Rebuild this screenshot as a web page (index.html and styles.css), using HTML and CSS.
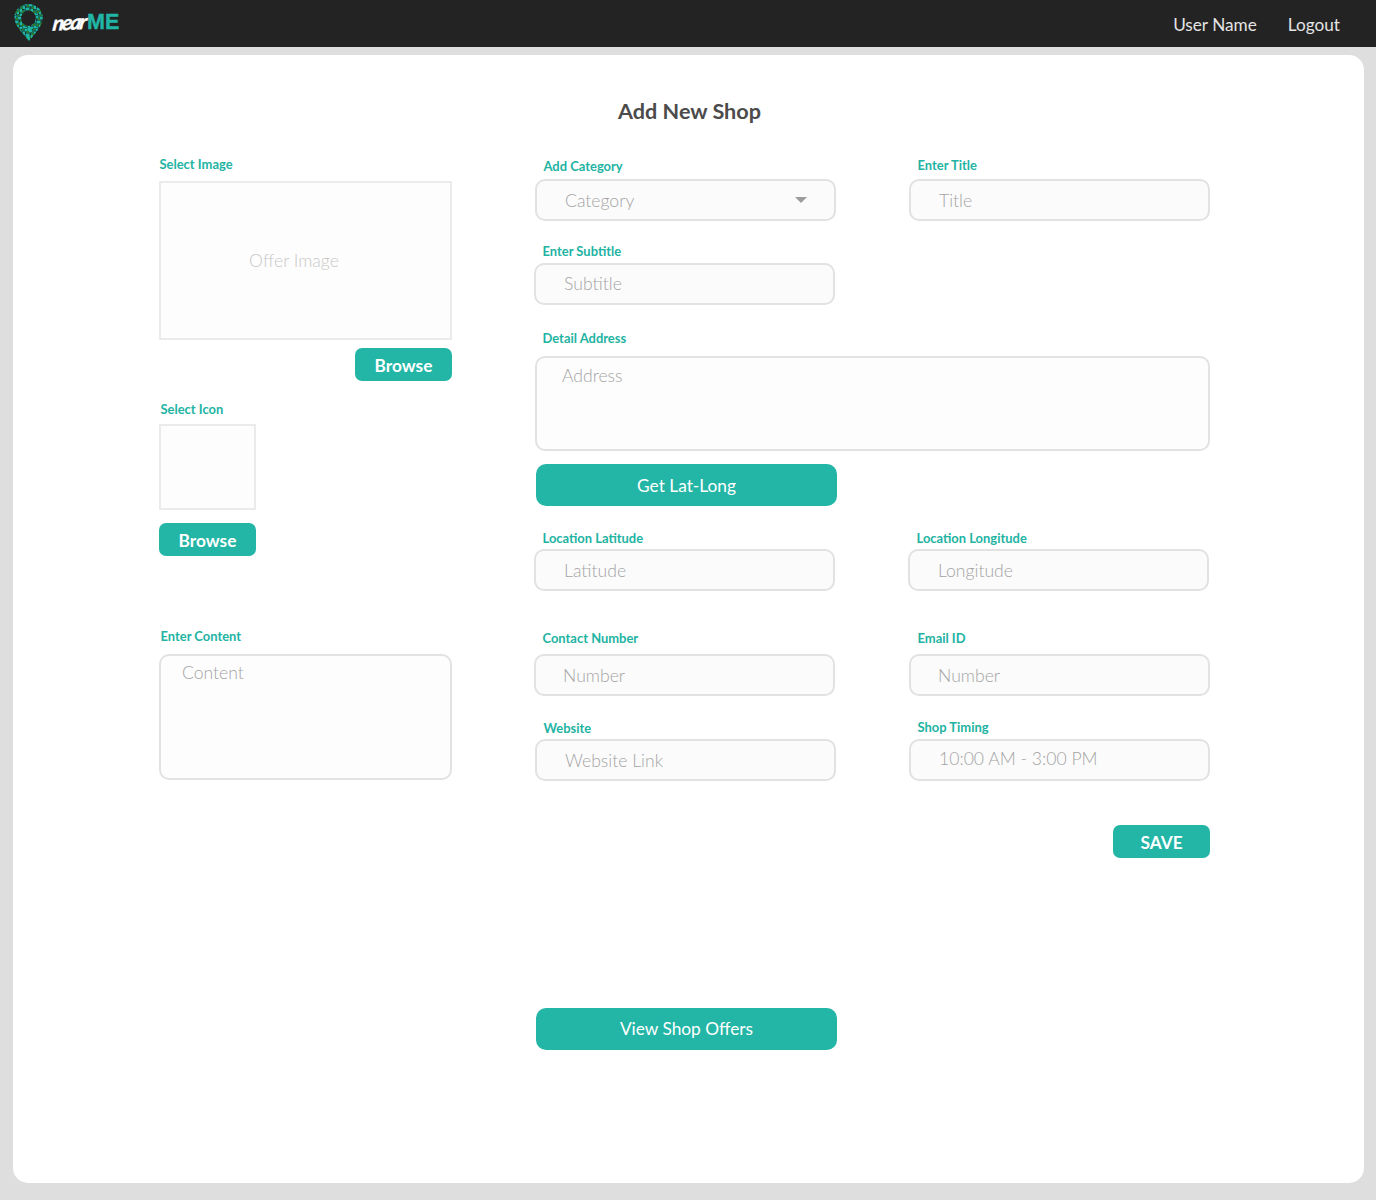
FILE: index.html
```html
<!DOCTYPE html>
<html lang="en">
<head>
<meta charset="utf-8">
<title>nearME - Add New Shop</title>
<link rel="stylesheet" href="styles.css">
</head>
<body>
<header class="topbar">
  <a class="brand">
    <svg class="pin" width="30" height="40" viewBox="0 0 30 40">
      <defs>
        <pattern id="speckle" width="11" height="13" patternUnits="userSpaceOnUse">
          <rect width="11" height="13" fill="#176f60"/>
          <path fill="#1fb5a6" d="M0 0h2v2H0zM4 1h3v2H4zM9 3h2v3H9zM1 5h3v2H1zM6 6h2v3H6zM3 9h2v2H3zM9 10h2v2H9zM0 11h2v1H0zM6 11h2v2H6z"/>
          <path fill="#2e7d24" d="M2 2h2v2H2zM7 4h2v2H7zM4 7h2v2H4zM8 8h2v2H8zM1 8h2v2H1zM4 12h2v1H4zM8 0h2v1H8z"/>
          <path fill="#1d3434" d="M5 4h1v2H5zM0 3h1v2H0zM8 6h2v1H8zM5 9h1v2H5zM2 11h1v1H2zM7 0h1v1H7z"/>
        </pattern>
      </defs>
      <path fill="url(#speckle)" fill-rule="evenodd" d="M14.5 1C22.5 1 28.8 7 28.8 14.5C28.8 23 21 30 15 38.5C9 30 .4 23 .4 14.5C.4 7 6.500 1 14.500 1ZM14.500 7.500A7.200 7.700 0 1 0 14.510 7.500Z"/>
      <circle cx="15.500" cy="26" r="2.200" fill="#20b6a6"/>
      <circle cx="14" cy="34" r="1.800" fill="#20b6a6"/>
    </svg>
    <span class="near">near</span><span class="me">ME</span>
  </a>
  <nav class="account"><a>User Name</a><a>Logout</a></nav>
</header>

<main class="card">
  <h1 class="title">Add New Shop</h1>
  <div class="form">
    <section class="media">
      <div class="label">Select Image</div>
      <div class="image-box">Offer Image</div>
      <button class="btn small right">Browse</button>
      <div class="label icon-label">Select Icon</div>
      <div class="icon-box"></div>
      <button class="btn small">Browse</button>
      <div class="label content-label">Enter Content</div>
      <div class="area content-area">Content</div>
    </section>

    <section class="details">
      <div class="row row-category">
        <div class="field inset low">
          <div class="label">Add Category</div>
          <div class="input select">Category
            <svg width="12" height="6" viewBox="0 0 12 6"><path fill="#9c9c9c" d="M0 0H12L6 6Z"/></svg>
          </div>
        </div>
        <div class="field inset">
          <div class="label">Enter Title</div>
          <div class="input">Title</div>
        </div>
      </div>
      <div class="row row-subtitle">
        <div class="field">
          <div class="label">Enter Subtitle</div>
          <div class="input raised">Subtitle</div>
        </div>
      </div>
      <div class="address">
        <div class="label">Detail Address</div>
        <div class="area address-area">Address</div>
        <button class="btn wide">Get Lat-Long</button>
      </div>
      <div class="row row-location">
        <div class="field">
          <div class="label">Location Latitude</div>
          <div class="input">Latitude</div>
        </div>
        <div class="field">
          <div class="label">Location Longitude</div>
          <div class="input">Longitude</div>
        </div>
      </div>
      <div class="row row-contact">
        <div class="field">
          <div class="label">Contact Number</div>
          <div class="input number">Number</div>
        </div>
        <div class="field inset">
          <div class="label">Email ID</div>
          <div class="input number">Number</div>
        </div>
      </div>
      <div class="row row-website">
        <div class="field inset low">
          <div class="label">Website</div>
          <div class="input">Website Link</div>
        </div>
        <div class="field inset">
          <div class="label">Shop Timing</div>
          <div class="input timing">10:00 AM - 3:00 PM</div>
        </div>
      </div>
      <button class="btn small save">SAVE</button>
      <button class="btn wide offers">View Shop Offers</button>
    </section>
  </div>
</main>
</body>
</html>
```

FILE: styles.css
```css
* { box-sizing: border-box; }

body {
  margin: 0;
  min-height: 1200px;
  background: #dedede;
  font-family: Lato, "Liberation Sans", sans-serif;
}

.topbar {
  display: flex;
  justify-content: space-between;
  height: 47px;
  padding: 0 36px 0 14px;
  background: #232323;
}

.brand { display: flex; align-items: flex-start; }
.pin { display: block; margin-top: 3px; }

.near {
  width: 43px;
  padding-left: 9px;
  color: #fff;
  font-size: 21px;
  font-weight: 700;
  font-style: italic;
  line-height: 24px;
  letter-spacing: -2px;
  margin-top: 10px;
  -webkit-text-stroke: 0.4px #fff;
  transform: skewX(-10deg) rotate(-3deg);
}

.me {
  margin-top: 10px;
  color: #20b6a6;
  font: bold 21.500px/24px "Liberation Sans", sans-serif;
  -webkit-text-stroke: 0.4px #20b6a6;
}

.account {
  display: flex;
  gap: 31px;
  color: #e4e4e4;
  font-size: 17.200px;
  line-height: 49px;
}

.card {
  height: 1128px;
  margin: 8px 12px 0 13px;
  padding-top: 42px;
  border-radius: 15px;
  background: #fff;
}

.title {
  margin: 0;
  padding: 1px 0 0 2px;
  color: #4b4b4b;
  font-size: 21.600px;
  font-weight: 700;
  line-height: 27px;
  text-align: center;
}

.form {
  display: grid;
  grid-template-columns: 293px 676px;
  column-gap: 82px;
  padding-left: 146px;
}

.label {
  color: #22b3a3;
  font-size: 12.950px;
  font-weight: 700;
  line-height: 16px;
  white-space: nowrap;
}

.media {
  display: flex;
  flex-direction: column;
  align-items: flex-start;
  padding-top: 31px;
}

.media .label { padding-left: 0.5px; }

.image-box {
  display: flex;
  align-items: center;
  justify-content: center;
  width: 293px;
  height: 159px;
  margin: 9px 0 8px;
  padding-right: 23px;
  border: 2px solid #ebebeb;
  background: #fdfdfd;
  color: #c8c8c8;
  font-size: 17.600px;
  font-weight: 300;
}

.btn {
  display: block;
  padding: 0;
  border: 0;
  background: #23b6a6;
  color: #fff;
  font-family: inherit;
}

.small {
  width: 97px;
  height: 33px;
  padding-top: 1px;
  border-radius: 7px;
  font-size: 17.300px;
  font-weight: 700;
}

.right { align-self: flex-end; }

.icon-label { margin: 20px 0 7px 1px; }

.icon-box {
  width: 97px;
  height: 86px;
  margin-bottom: 13px;
  border: 2px solid #ebebeb;
  background: #fdfdfd;
}

.content-label { margin: 72px 0 10px 1px; }

.input,
.area {
  border: 2px solid #e2e2e2;
  border-radius: 10px;
  background: #fbfbfb;
  color: #a4a4a4;
  font-size: 17.600px;
  font-weight: 300;
}

.area {
  padding-top: 7px;
  background: #fdfdfd;
  line-height: 22px;
}

.content-area {
  width: 293px;
  height: 126px;
  padding: 6px 0 0 21px;
}

.details {
  display: flex;
  flex-direction: column;
  padding-top: 32px;
}

.row {
  display: grid;
  grid-template-columns: 301px 301px;
  column-gap: 73px;
}

.field .label { margin: 0 0 3px 8.500px; }

.input {
  display: flex;
  align-items: center;
  width: 301px;
  height: 42px;
  padding: 0 27px 0 28px;
}

.inset { padding-left: 1px; }
.low .label { transform: translateY(1px); }
.select { justify-content: space-between; }
.raised { padding-bottom: 2px; }
.timing { padding-bottom: 4px; }
.number { padding-left: 27px; }

.row-category .label { margin-bottom: 6px; }
.row-subtitle { margin-top: 22px; }
.row-subtitle .label { margin-bottom: 4px; }

.address { margin-top: 25px; }
.address .label { margin-left: 8.500px; }

.address-area {
  width: 675px;
  height: 95px;
  margin: 10px 0 13px 1px;
  padding-left: 25px;
}

.wide {
  width: 301px;
  height: 42px;
  margin-left: 2px;
  border-radius: 10px;
  font-size: 17.300px;
}

.row-location { margin-top: 24px; }
.row-contact { margin-top: 39px; }
.row-contact .label { margin-bottom: 8px; }
.row-website { margin-top: 23px; }
.row-website .label { margin-bottom: 4px; }

.save {
  align-self: flex-end;
  margin-top: 44px;
}

.offers {
  margin-top: 150px;
  padding-bottom: 2px;
}
```
